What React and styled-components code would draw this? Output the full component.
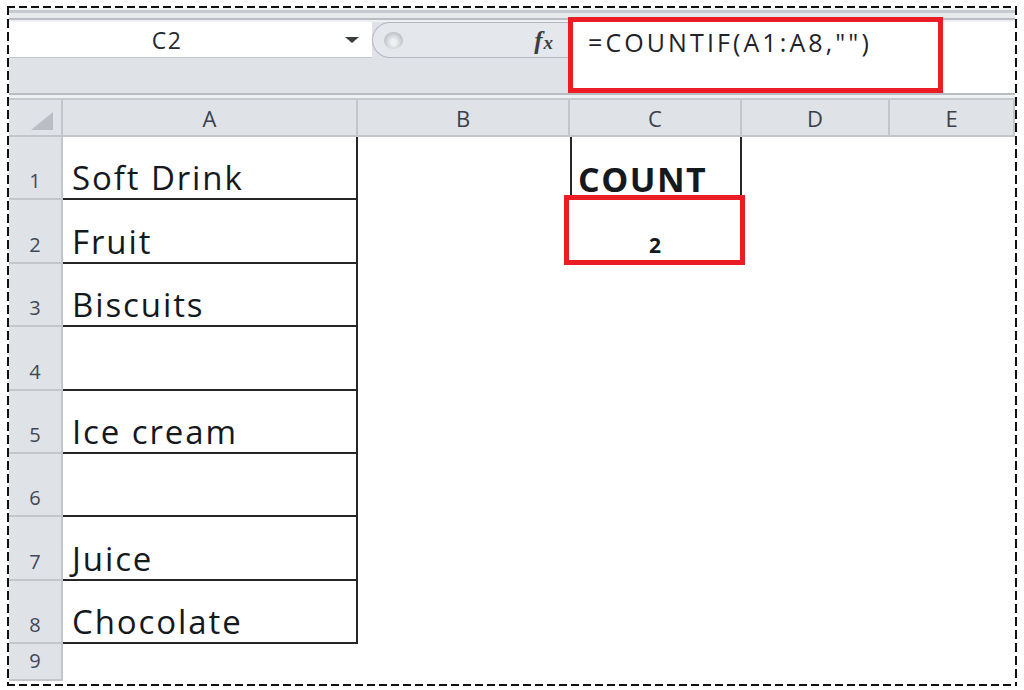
import React from 'react'
import styled, { createGlobalStyle, css } from 'styled-components'

const GlobalStyle = createGlobalStyle`
  html, body {
    margin: 0;
    padding: 0;
    background: #ffffff;
  }
  body {
    font-family: "Open Sans", "Liberation Sans", sans-serif;
  }
`

const dash = (dir, on, off) =>
  `repeating-linear-gradient(${dir}, #111 0 ${on}px, transparent ${on}px ${on + off}px)`

const Frame = styled.div`
  box-sizing: border-box;
  width: 1010px;
  height: 680px;
  margin: 6px 0 0 7px;
  padding: 2px;
  display: flex;
  flex-direction: column;
  background:
    ${dash('90deg', 8, 4)} left top / 100% 2px no-repeat,
    ${dash('90deg', 8, 4)} left bottom / 100% 2px no-repeat,
    ${dash('180deg', 9, 4)} left top / 2px 100% no-repeat,
    ${dash('180deg', 9, 4)} right top / 2px 100% no-repeat,
    #ffffff;
`

const Window = styled.div`
  flex: 1;
  display: flex;
  flex-direction: column;
  overflow: hidden;
  background: #ffffff;
`

const TopStrip = styled.div`
  height: 14px;
  flex: none;
  background: linear-gradient(#f1f3f5 0 2px, #c6cacf 2px 5px, #e7eaed 5px 10px, #b9bdc3 10px 12px, #eef0f2 12px);
`

const FormulaBar = styled.div`
  display: flex;
  height: 71px;
  flex: none;
`

const LeftPane = styled.div`
  width: 559px;
  display: flex;
  flex-direction: column;
  background: #dfe3e8;
`

const NameRow = styled.div`
  height: 36px;
  display: flex;
`

const NameBox = styled.div`
  width: 363px;
  display: flex;
  align-items: center;
  background: #ffffff;
  border-bottom: 1px solid #c2c6cc;
  box-sizing: border-box;
`

const NameText = styled.span`
  flex: 1;
  text-align: center;
  padding-right: 20px;
  font-size: 23px;
  letter-spacing: 1.5px;
  color: #262a30;
`

const Caret = styled.span`
  width: 0;
  height: 0;
  margin-right: 13px;
  border-left: 7px solid transparent;
  border-right: 7px solid transparent;
  border-top: 6px solid #3a3d42;
`

const Handle = styled.div`
  flex: 1;
  display: flex;
  align-items: center;
  box-sizing: border-box;
  padding-left: 11px;
  background: #e4e7eb;
  border: 1px solid #b4b9bf;
  border-right: none;
  border-radius: 18px 0 0 18px;
`

const Grip = styled.span`
  width: 19px;
  height: 17px;
  border-radius: 50%;
  background: radial-gradient(ellipse at 50% 60%, #eef0f2 0 20%, #bfc3c8 70%, #cfd2d6 100%);
`

const Fx = styled.span`
  margin-left: auto;
  margin-right: 15px;
  font-family: "Liberation Serif", "DejaVu Serif", serif;
  font-style: italic;
  font-weight: bold;
  font-size: 25px;
  line-height: 1;
  color: #3b3e44;
  & small {
    font-size: 19px;
    margin-left: 1px;
  }
`

const FormulaInput = styled.div`
  flex: 1;
  position: relative;
  background: #ffffff;
  padding: 3px 0 0 20px;
  font-size: 25px;
  letter-spacing: 3.1px;
  color: #1f2329;
`

const RedFrame = styled.div`
  position: absolute;
  top: -5px;
  left: 0;
  width: 375px;
  bottom: 0;
  box-sizing: border-box;
  border: 5px solid #ec1c24;
`

const Divider = styled.div`
  height: 7px;
  flex: none;
  background: linear-gradient(#b9bdc3 0 2px, #eef0f2 2px 5px, #c6cacf 5px);
`

const Sheet = styled.div`
  flex: 1;
  display: grid;
  grid-template-columns: 54px 295px 212px 172px 148px 1fr;
  grid-template-rows: 37px repeat(8, 63.4px) 1fr;
`

const headBg = '#dfe3e8'
const headLine = '#c3c7cc'

const Corner = styled.div`
  position: relative;
  background: ${headBg};
  border-right: 2px solid ${headLine};
  border-bottom: 2px solid ${headLine};
  &::after {
    content: "";
    position: absolute;
    right: 8px;
    bottom: 5px;
    border-left: 22px solid transparent;
    border-bottom: 18px solid #babec4;
  }
`

const ColHead = styled.div`
  display: flex;
  align-items: center;
  justify-content: center;
  background: ${headBg};
  border-right: 2px solid ${headLine};
  border-bottom: 2px solid ${headLine};
  font-size: 22px;
  color: #3a404a;
`

const RowHead = styled.div`
  display: flex;
  align-items: flex-end;
  justify-content: center;
  box-sizing: border-box;
  padding-bottom: 7px;
  background: ${headBg};
  border-right: 2px solid ${headLine};
  border-bottom: 2px solid ${headLine};
  font-size: 20px;
  line-height: 1;
  color: #3f4856;
  ${p => p.$last && css`
    align-items: center;
    padding-bottom: 2px;
    margin-bottom: 3px;
  `}
`

const Cell = styled.div`
  position: relative;
  display: flex;
  align-items: flex-end;
  box-sizing: border-box;
  padding: 0 0 4px 9px;
  font-size: 33px;
  line-height: 1;
  letter-spacing: 1.9px;
  color: #15181d;
  ${p => p.$boxed && css`
    border-right: 2px solid #262626;
    border-bottom: 2px solid #262626;
  `}
  ${p => p.$sides && css`
    border-left: 2px solid #262626;
    border-right: 2px solid #262626;
    padding-left: 6px;
  `}
  ${p => p.$bold && css`
    font-size: 34px;
    font-weight: 700;
    letter-spacing: 1.5px;
  `}
  ${p => p.$small && css`
    justify-content: center;
    padding: 0 0 8px 0;
    font-size: 21px;
    font-weight: 700;
  `}
  ${p => p.$mark && css`
    &::after {
      content: "";
      position: absolute;
      inset: -5px -3px -1px -6px;
      border: 5px solid #ec1c24;
    }
  `}
`

const columns = ['A', 'B', 'C', 'D', 'E']

const items = ['Soft Drink', 'Fruit', 'Biscuits', '', 'Ice cream', '', 'Juice', 'Chocolate']

const Row = ({ n, item }) => (
  <>
    <RowHead>{n}</RowHead>
    <Cell $boxed>{item}</Cell>
    <Cell />
    {n === 1 && <Cell $sides $bold>COUNT</Cell>}
    {n === 2 && <Cell $small $mark>2</Cell>}
    {n > 2 && <Cell />}
    <Cell />
    <Cell />
  </>
)

export default function App() {
  return (
    <>
      <GlobalStyle />
      <Frame>
        <Window>
          <TopStrip />
          <FormulaBar>
            <LeftPane>
              <NameRow>
                <NameBox>
                  <NameText>C2</NameText>
                  <Caret />
                </NameBox>
                <Handle>
                  <Grip />
                  <Fx>f<small>x</small></Fx>
                </Handle>
              </NameRow>
            </LeftPane>
            <FormulaInput>
              =COUNTIF(A1:A8,"")
              <RedFrame />
            </FormulaInput>
          </FormulaBar>
          <Divider />
          <Sheet>
            <Corner />
            {columns.map(c => <ColHead key={c}>{c}</ColHead>)}
            {items.map((item, i) => <Row key={i} n={i + 1} item={item} />)}
            <RowHead $last>9</RowHead>
          </Sheet>
        </Window>
      </Frame>
    </>
  )
}
